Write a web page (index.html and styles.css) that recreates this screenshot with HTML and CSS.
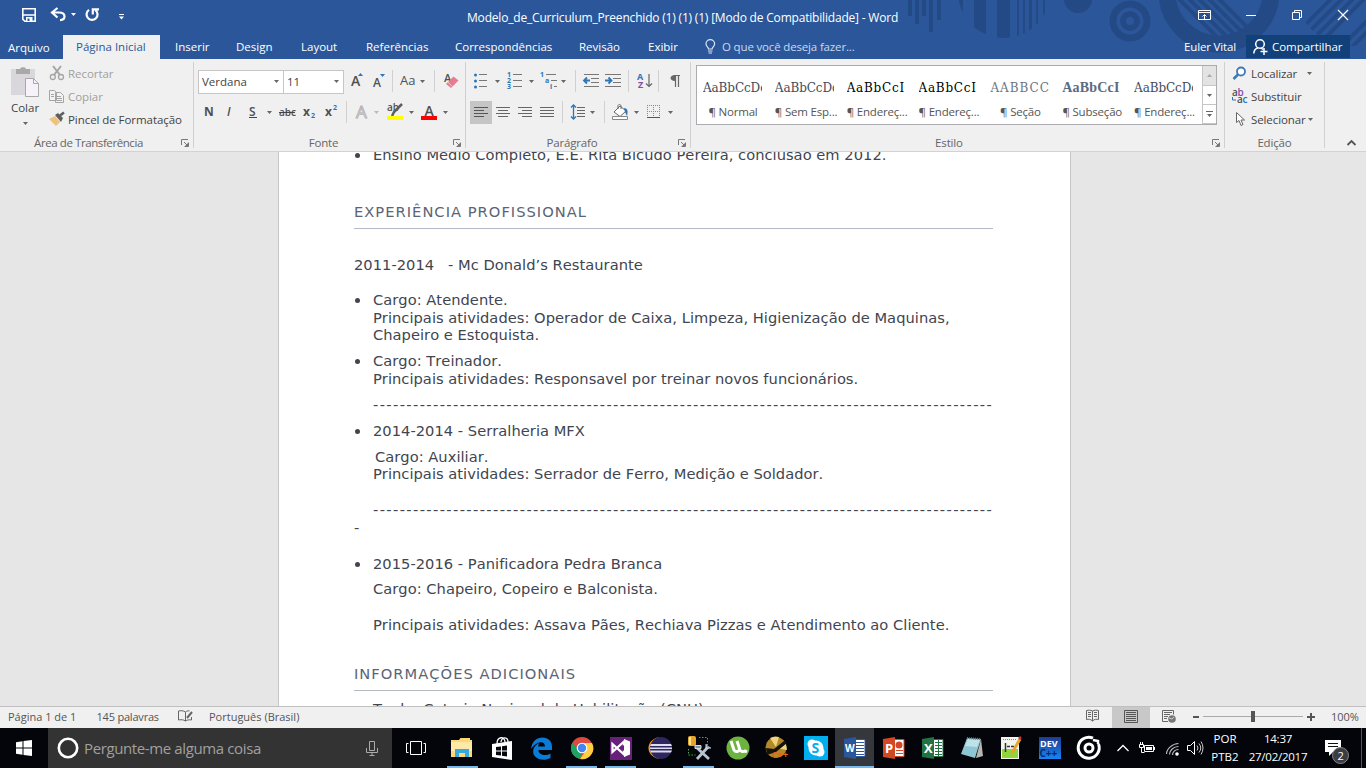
FILE: index.html
```html
<!DOCTYPE html>
<html lang="pt-BR">
<head>
<meta charset="utf-8">
<title>Modelo_de_Curriculum_Preenchido - Word</title>
<link rel="stylesheet" href="styles.css">
</head>
<body>
<svg width="0" height="0" class="defs"><defs>
<symbol id="caret" viewBox="0 0 5 3"><path d="M0 0h5L2.500 3z" fill="#666"/></symbol>
<symbol id="launch" viewBox="0 0 8 8"><path d="M.5 6V.5H7M3 3l3 3M7.500 3.500v4h-4" fill="none" stroke="#777"/><path d="M7 4v3H4z" fill="#777"/></symbol>
</defs></svg>
<div class="app">
<header class="head">
<svg class="pattern" width="480" height="59" viewBox="886 0 480 59">
<defs><clipPath id="c1"><circle cx="1004" cy="-8" r="46"/></clipPath><clipPath id="c2"><circle cx="1219" cy="-8" r="46"/></clipPath><clipPath id="c3"><circle cx="1352" cy="-12" r="58"/></clipPath></defs>
<g fill="#244a86"><path d="M908 0h4v16h-4zM915 0h4v24h-4zM922 0h4v16h-4zM929 0h4v32h-4zM937 0h4v20h-4z"/>
<path clip-path="url(#c1)" d="M955 0h8v40h-8zM974 0h12v40h-12zM997 0h13v40h-13zM1017 0h2v40h-2zM1023 0h2v40h-2zM1029 0h3v40h-3zM1036 0h2v40h-2zM1043 0h2v40h-2zM1049 0h2v40h-2z"/>
<circle cx="1078" cy="-1" r="14"/></g>
<g fill="none" stroke="#244a86"><circle cx="1130" cy="21" r="17" stroke-width="7"/><circle cx="1130" cy="21" r="7" stroke-width="6"/><circle cx="1219" cy="-8" r="52" stroke-width="17"/>
<path clip-path="url(#c2)" stroke-width="4" d="M1160-20l70 70M1170-20l70 70M1180-20l70 70M1190-20l70 70M1200-20l70 70"/>
<path clip-path="url(#c3)" stroke-width="4" d="M1350-20l-70 70M1361-20l-70 70M1372-20l-70 70M1383-20l-70 70M1408-20l-70 70M1419-20l-70 70"/></g>
</svg>
<div class="titlebar">
<svg width="29" height="35" viewBox="21 0 29 35"><path d="M22.800 8.800h12.400v12.400H24.800l-2-2zM22.500 15h13" fill="none" stroke="#fff" stroke-width="1.600"/><path d="M26 17h6.500v5H26z" fill="#fff"/><path d="M27.500 18.500h2V21h-2z" fill="#2b579a"/></svg>
<svg width="21" height="35" viewBox="50 0 21 35"><path d="M57.500 8L52 12.500l5.500 5M53 12.500h6c4.500 0 5.500 2.500 5.500 4 0 2.300-1.500 3.500-4.500 3.700" fill="none" stroke="#fff" stroke-width="2.200"/></svg>
<svg width="14" height="35" viewBox="71 0 14 35"><path d="M71 13h5l-2.500 3z" fill="#fff"/></svg>
<svg width="34" height="35" viewBox="85 0 34 35"><path d="M89 9.800a5.500 5.500 0 1 0 6.500.3M92.800 14.500V9.300H99" fill="none" stroke="#fff" stroke-width="2.200"/></svg>
<svg width="8" height="35" viewBox="119 0 8 35"><path d="M119 14h5v1h-5zM119 16.500h5l-2.500 3z" fill="#fff"/></svg>
<span class="doc-title">Modelo_de_Curriculum_Preenchido (1) (1) (1) [Modo de Compatibilidade] - Word</span>
<svg width="48" height="35" viewBox="1198 0 48 35"><path d="M1198.500 10.500h12v9h-12zM1198.500 12.500h12M1204.500 19v-4.500M1202.500 16.500l2-2 2 2" fill="none" stroke="#fff"/></svg>
<svg width="46" height="35" viewBox="1246 0 46 35"><path d="M1246 15.500h10" stroke="#fff"/></svg>
<svg width="46" height="35" viewBox="1292 0 46 35"><path d="M1292.500 12.500h7v7h-7zM1294.500 12.500v-2h7v7h-2" fill="none" stroke="#fff"/></svg>
<svg width="28" height="35" viewBox="1338 0 28 35"><path d="M1338 10l10 10M1348 10l-10 10" stroke="#fff" stroke-width="1.200"/></svg>
</div>
<nav class="tabs">
<span class="file">Arquivo</span><span class="active">Página Inicial</span><span>Inserir</span><span>Design</span><span>Layout</span><span>Referências</span><span>Correspondências</span><span>Revisão</span><span>Exibir</span>
<svg width="17" height="24" viewBox="705 35 17 24"><path d="M708.500 49c0-1.800-2.500-2.500-2.500-5a4.300 4.300 0 0 1 8.600 0c0 2.500-2.500 3.200-2.500 5zM708 51h4.500M708.500 53h3.500" fill="none" stroke="#dce6f4" stroke-width="1.200"/></svg>
<span class="tell">O que você deseja fazer...</span><span class="user">Euler Vital</span>
<span class="share"><svg width="20" height="23" viewBox="1252 35 20 23"><circle cx="1260" cy="44" r="4.300" fill="none" stroke="#fff" stroke-width="1.500"/><path d="M1258 48c-2.500.5-4 2.500-4.200 5.500M1261 48l2 1.500M1260.500 51.500h7M1264 48v7" fill="none" stroke="#fff" stroke-width="1.500"/></svg>Compartilhar</span>
</nav>
</header>

<section class="ribbon">
<div class="group clip">
<div class="paste"><svg width="42" height="41" viewBox="6 59 42 41"><path d="M13 69h24v26H13z" fill="#d9d6dc"/><path d="M18 74v-5h4c0-2.500 6-2.500 6 0h4v5z" fill="#a9a9a9"/><path d="M27.500 78.500h8l5 5v13h-13z" fill="#f7f2fa" stroke="#a9a9a9"/><path d="M35.500 78.500v5h5" fill="none" stroke="#a9a9a9"/></svg><span>Colar</span><svg width="5" height="3"><use href="#caret"/></svg></div>
<div class="clip-list">
<span class="off"><svg width="18" height="23" viewBox="50 62 18 23"><path d="M53 66l7 9M61 66l-7 9" stroke="#a5a5a5" stroke-width="2"/><circle cx="52.800" cy="77" r="2.500" fill="none" stroke="#a5a5a5" stroke-width="1.300"/><circle cx="61" cy="77" r="2.500" fill="none" stroke="#a5a5a5" stroke-width="1.300"/></svg>Recortar</span>
<span class="off"><svg width="18" height="23" viewBox="50 85 18 23"><path d="M49.500 90.500h5l2 2v8h-7zM55.500 92.500h5l3 3v7h-8z" fill="#f2f2f2" stroke="#a5a5a5"/><path d="M51 94.500h3M51 96.500h3M57 96.500h4M57 98.500h5M57 100.500h5" stroke="#a5a5a5"/></svg>Copiar</span>
<span><svg width="18" height="23" viewBox="50 108 18 23"><path d="M49 119l6-3 5 6-4 4z" fill="#edc27e"/><path d="M55 115l3-2 5 5-2 4z" fill="#5e5e5e"/><path d="M60 115.500l4-3" stroke="#5e5e5e" stroke-width="2.500"/></svg>Pincel de Formatação</span>
</div>
<footer><span>Área de Transferência</span><svg width="8" height="8"><use href="#launch"/></svg></footer>
</div>

<div class="group font">
<div class="row"><span class="box face">Verdana<svg width="5" height="3"><use href="#caret"/></svg></span><span class="box size">11<svg width="5" height="3"><use href="#caret"/></svg></span>
<svg width="27" height="31" viewBox="344 66 27 31"><text x="351" y="86" class="g s f14">A</text><path d="M358 76h5l-2.500-3z" fill="#2e75b6"/></svg>
<svg width="29" height="31" viewBox="371 66 29 31"><text x="373" y="87" class="g s f12">A</text><path d="M380 74h5l-2.500 3z" fill="#2e75b6"/><path d="M392.500 70v22" stroke="#d0d0d0"/></svg>
<svg width="42" height="31" viewBox="400 66 42 31"><text x="400" y="85" class="g f13">Aa</text><use href="#caret" x="420" y="80" width="5" height="3"/><path d="M434.500 70v22" stroke="#d0d0d0"/></svg>
<svg width="20" height="31" viewBox="442 66 20 31"><text x="444" y="82" class="g s f11">A</text><path d="M446 84l7.500-7.500 5 4-7.500 7.500z" fill="#e77c8e"/><path d="M448 82l4 4.500" stroke="#f5c4cc"/></svg></div>
<div class="row">
<svg width="29" height="31" viewBox="194 97 29 31"><text x="204" y="116" class="g b f12">N</text></svg>
<svg width="22" height="31" viewBox="223 97 22 31"><text x="227" y="116" class="g s i f12">I</text></svg>
<svg width="33" height="31" viewBox="245 97 33 31"><text x="249" y="116" class="g s f12">S</text><path d="M249 117.500h8" stroke="#444"/><use href="#caret" x="267" y="111" width="5" height="3"/></svg>
<svg width="23" height="31" viewBox="278 97 23 31"><text x="279" y="116" class="g s f10">abc</text><path d="M279 112.500h16" stroke="#444"/></svg>
<svg width="23" height="31" viewBox="301 97 23 31"><text x="303" y="116" class="g b f12">x</text><text x="311" y="118" class="bl b f7">2</text></svg>
<svg width="29" height="31" viewBox="324 97 29 31"><text x="325" y="116" class="g b f12">x</text><text x="333" y="110" class="bl b f7">2</text><path d="M346.500 101v22" stroke="#d0d0d0"/></svg>
<svg width="31" height="31" viewBox="353 97 31 31"><text x="356" y="118" class="outline">A</text><path d="M374 111h5l-2.500 3z" fill="#bbb"/></svg>
<svg width="34" height="31" viewBox="384 97 34 31"><text x="387" y="111" class="g s f10">ab</text><path d="M392 116l2-4 8-8" fill="none" stroke="#5e5e5e" stroke-width="2.500"/><path d="M387 116h16v4h-16z" fill="#ff0"/><use href="#caret" x="409" y="111" width="5" height="3"/></svg>
<svg width="34" height="31" viewBox="418 97 34 31"><text x="424.500" y="116" class="g s f14">A</text><path d="M421 116h16v4h-16z" fill="#f00"/><use href="#caret" x="443" y="111" width="5" height="3"/></svg></div>
<footer><span>Fonte</span><svg width="8" height="8"><use href="#launch"/></svg></footer>
</div>

<div class="group para">
<div class="row">
<svg width="39" height="31" viewBox="466 66 39 31"><g fill="#2e75b6"><circle cx="475.500" cy="75" r="1.500"/><circle cx="475.500" cy="81" r="1.500"/><circle cx="475.500" cy="87" r="1.500"/></g><path d="M479 74.500h8M479 80.500h8M479 86.500h8" stroke="#777"/><use href="#caret" x="495" y="80" width="5" height="3"/></svg>
<svg width="34" height="31" viewBox="505 66 34 31"><text x="507" y="77" class="bl b f7">1</text><text x="507" y="83" class="bl b f7">2</text><text x="507" y="89" class="bl b f7">3</text><path d="M513 74.500h9M513 80.500h9M513 86.500h9" stroke="#777"/><use href="#caret" x="529" y="80" width="5" height="3"/></svg>
<svg width="43" height="31" viewBox="539 66 43 31"><text x="540" y="77" class="bl b f7">1</text><text x="545" y="83" class="bl b f7">a</text><text x="550" y="89" class="bl b f7">i</text><path d="M546 74.500h10M551 80.500h6M554 86.500h3" stroke="#777"/><use href="#caret" x="561" y="80" width="5" height="3"/><path d="M575.500 70v22" stroke="#d0d0d0"/></svg>
<svg width="22" height="31" viewBox="582 66 22 31"><path d="M584 74.500h15M591 78.500h8M591 82.500h8M584 86.500h15" stroke="#777"/><path d="M590 80.500h-6M587 77.500l-3 3 3 3" fill="none" stroke="#2e75b6" stroke-width="1.800"/></svg>
<svg width="32" height="31" viewBox="604 66 32 31"><path d="M605 74.500h16M613 78.500h8M613 82.500h8M605 86.500h16" stroke="#777"/><path d="M605 80.500h6M608.500 77.500l3 3-3 3" fill="none" stroke="#2e75b6" stroke-width="1.800"/><path d="M628.500 70v22" stroke="#d0d0d0"/></svg>
<svg width="30" height="31" viewBox="636 66 30 31"><text x="637" y="80" class="bl b f9">A</text><text x="638" y="88" class="pu b f9">Z</text><path d="M649 74v12M646 83.500l3 3 3-3" fill="none" stroke="#666" stroke-width="1.200"/><path d="M658.500 70v22" stroke="#d0d0d0"/></svg>
<svg width="20" height="31" viewBox="666 66 20 31"><path d="M680 75.500h-6M675.500 75v12M678.500 75v12" stroke="#666" fill="none" stroke-width="1.200"/><path d="M675 75v6c-6 0-6-6 0-6z" fill="#666"/></svg></div>
<div class="row">
<svg width="28" height="31" viewBox="466 97 28 31"><path d="M470 101h22v23h-22z" fill="#c5c5c5"/><path d="M474 107.500h14M474 110.500h10M474 113.500h14M474 116.500h10" stroke="#555"/></svg>
<svg width="22" height="31" viewBox="494 97 22 31"><path d="M496 107.500h14M498 110.500h10M496 113.500h14M498 116.500h10" stroke="#666"/></svg>
<svg width="22" height="31" viewBox="516 97 22 31"><path d="M518 107.500h14M522 110.500h10M518 113.500h14M522 116.500h10" stroke="#666"/></svg>
<svg width="30" height="31" viewBox="538 97 30 31"><path d="M540 107.500h14M540 110.500h14M540 113.500h14M540 116.500h14" stroke="#666"/><path d="M562.500 101v22" stroke="#d0d0d0"/></svg>
<svg width="42" height="31" viewBox="568 97 42 31"><path d="M577 107.500h8M577 110.500h8M577 113.500h8M577 116.500h8" stroke="#666"/><path d="M573.500 105v14M571 107.500l2.500-2.500 2.500 2.500M571 116.500l2.500 2.500 2.500-2.500" fill="none" stroke="#2e75b6" stroke-width="1.300"/><use href="#caret" x="590" y="111" width="5" height="3"/><path d="M604.500 101v22" stroke="#d0d0d0"/></svg>
<svg width="34" height="31" viewBox="610 97 34 31"><path d="M614 112l6-6 6 5-6 5.500zM618 109v-3c0-2 3-2 3 0v3" fill="#fff" stroke="#666"/><path d="M624 108c4 0 4 4 3 8l-2-4z" fill="#2e75b6"/><path d="M612.500 116.500h15v3h-15z" fill="#fff" stroke="#888"/><use href="#caret" x="634" y="111" width="5" height="3"/></svg>
<svg width="32" height="31" viewBox="644 97 32 31"><path d="M647.500 105v12M653.500 105v12M659.500 105v12M647 105.500h13M647 111.500h13" stroke="#888" stroke-dasharray="1 1"/><path d="M647 117.500h13" stroke="#555"/><use href="#caret" x="668" y="111" width="5" height="3"/></svg></div>
<footer><span>Parágrafo</span><svg width="8" height="8"><use href="#launch"/></svg></footer>
</div>

<div class="group styles">
<div class="gallery">
<div class="st"><b>AaBbCcDd</b><span>¶ Normal</span></div><div class="st"><b>AaBbCcDd</b><span>¶ Sem Esp...</span></div><div class="st wide"><b>AaBbCcI</b><span>¶ Endereç...</span></div><div class="st wide"><b>AaBbCcI</b><span>¶ Endereç...</span></div><div class="st caps"><b>AABBCC</b><span>¶ Seção</span></div><div class="st bold"><b>AaBbCcI</b><span>¶ Subseção</span></div><div class="st"><b>AaBbCcDd</b><span>¶ Endereç...</span></div>
<div class="scroll"><i class="dis"><svg width="5" height="3"><path d="M0 3h5L2.500 0z" fill="#aaa"/></svg></i><i><svg width="5" height="3"><use href="#caret"/></svg></i><i><svg width="7" height="7"><path d="M0 .5h7" stroke="#666"/><path d="M1 3h5L3.500 6z" fill="#666"/></svg></i></div>
</div>
<footer><span>Estilo</span><svg width="8" height="8"><use href="#launch"/></svg></footer>
</div>

<div class="group edit">
<div class="edit-list">
<span><svg width="19" height="23" viewBox="1232 62 19 23"><circle cx="1241" cy="71.500" r="4" fill="#fff" stroke="#3b78b8" stroke-width="1.800"/><path d="M1238 74.500l-4.500 4.500" stroke="#3b78b8" stroke-width="2.500"/></svg><em>Localizar</em><svg width="5" height="3" class="far"><use href="#caret"/></svg></span>
<span><svg width="19" height="23" viewBox="1232 85 19 23"><text x="1232" y="96" class="g s f10">a</text><text x="1237.500" y="96" class="pu s f10">b</text><text x="1237" y="103" class="g s f10">a</text><text x="1242.500" y="103" class="bl s f10">c</text><path d="M1232.500 97v3h3.500" fill="none" stroke="#2e75b6"/></svg><em>Substituir</em></span>
<span><svg width="19" height="23" viewBox="1232 108 19 23"><path d="M1236.500 112.500v10l2.500-2 2 5 2-1-2-4.500h3.500z" fill="#fff" stroke="#666"/></svg><em>Selecionar</em><svg width="5" height="3"><use href="#caret"/></svg></span>
</div>
<footer><span>Edição</span></footer>
</div>
<div class="collapse"><svg width="9" height="6"><path d="M.5 5l4-4 4 4" fill="none" stroke="#555" stroke-width="1.800"/></svg></div>
</section>

<main class="desk"><article class="page">
<p class="li">Ensino Médio Completo, E.E. Rita Bicudo Pereira, conclusão em 2012.</p>
<h2>EXPERIÊNCIA PROFISSIONAL</h2>
<p><span class="years">2011-2014</span>- Mc Donald’s Restaurante</p>
<p class="li">Cargo: Atendente.</p>
<p class="in">Principais atividades: Operador de Caixa, Limpeza, Higienização de Maquinas,</p>
<p class="in">Chapeiro e Estoquista.</p>
<p class="li">Cargo: Treinador.</p>
<p class="in">Principais atividades: Responsavel por treinar novos funcionários.</p>
<p class="in dash">---------------------------------------------------------------------------------------------</p>
<p class="li">2014-2014 - Serralheria MFX</p>
<p class="in more">Cargo: Auxiliar.</p>
<p class="in">Principais atividades: Serrador de Ferro, Medição e Soldador.</p>
<p class="in dash">---------------------------------------------------------------------------------------------</p>
<p class="dash">-</p>
<p class="li">2015-2016 - Panificadora Pedra Branca</p>
<p class="in">Cargo: Chapeiro, Copeiro e Balconista.</p>
<p class="in">Principais atividades: Assava Pães, Rechiava Pizzas e Atendimento ao Cliente.</p>
<h2>INFORMAÇÕES ADICIONAIS</h2>
<p class="li">Tenho Cateria Nacional de Habilitação (CNH).</p>
</article></main>

<div class="status">
<span>Página 1 de 1</span><span class="words">145 palavras</span>
<svg width="31" height="21" viewBox="178 707 31 21"><path d="M185.500 721v-9c-2-1.500-5-1.500-7-1v9c2-.5 5-.5 7 1 1.500-1 3.500-1.500 6-1v-3M185.500 712c1-.8 2-1.200 4-1.200" fill="none" stroke="#666"/><path d="M187 718l5-6" stroke="#666" stroke-width="2"/></svg>
<span>Português (Brasil)</span>
<svg width="25" height="21" viewBox="1087 707 25 21"><path d="M1092.500 721v-10c-2-1-4-1-6-.5v9c2-.5 4-.5 6 1.500 2-2 4-2 6-1.500v-9c-2-.5-4-.5-6 .5M1088 712.500h3M1088 714.500h3M1088 716.500h3M1094 712.500h3M1094 714.500h3M1094 716.500h3" fill="none" stroke="#666"/></svg>
<svg class="on" width="38" height="21" viewBox="1112 707 38 21"><path d="M1124.500 710.500h13v12h-13zM1126 712.500h10M1126 714.500h10M1126 716.500h10M1126 718.500h10M1126 720.500h10" fill="none" stroke="#555"/></svg>
<svg width="43" height="21" viewBox="1150 707 43 21"><path d="M1168 721.500h-5.500v-11h11v4M1164 712.500h8M1164 714.500h6M1164 716.500h4M1164 718.500h3" fill="none" stroke="#666"/><circle cx="1172" cy="719" r="3.800" fill="#777"/><path d="M1169 718l3 1 2-2" stroke="#ccc" fill="none"/></svg>
<svg width="138" height="21" viewBox="1193 707 138 21"><path d="M1203 716.500h100" stroke="#aaa"/><path d="M1193 716h6v2h-6zM1251 711h4v11h-4zM1307 716h8v2h-8zM1310 713h2v8h-2z" fill="#555"/></svg>
<span>100%</span>
</div>

<div class="taskbar">
<div class="start"><svg width="16" height="16"><path d="M0 2.200l6.500-.9v6.200H0zM7.500 1.100L16 0v7.500H7.500zM0 8.500h6.500v6.200L0 13.800zM7.500 8.500H16V16l-8.500-1.100z" fill="#fff"/></svg></div>
<div class="search"><svg width="22" height="22"><circle cx="11" cy="11" r="9.200" fill="none" stroke="#fff" stroke-width="2.600"/></svg><span>Pergunte-me alguma coisa</span><svg width="12" height="17"><path d="M3.500 1.500h5v9h-5zM.5 8v4.500h11V8M6 13v3M3.500 15.500h5" fill="none" stroke="#aaa"/></svg></div>
<div class="view"><svg width="20" height="14"><path d="M4.500.5h11v13h-11zM2.500 2.500h-2v9h2M17.500 2.500h2v9h-2" fill="none" stroke="#fff"/></svg></div>
<div class="apps">
<i class="run"><svg width="24" height="24"><path d="M1 4h8l1.500-2H20v2h2v17H1z" fill="#fbd977"/><path d="M1 6h21v9H1z" fill="#ffe9a6"/><path d="M5 21v-8h14v8h-4v-4H9v4z" fill="#39a8dc"/></svg></i>
<i><svg width="24" height="24"><path d="M2 8l20-3v19L2 21z" fill="#fff"/><path d="M7 8c0-8 8-8 8-2M11 6c1-6 7-5 7 0" fill="none" stroke="#fff" stroke-width="1.300"/><path d="M6 11l5-.6v4H6zM12 10.200l5-.7v5h-5zM6 15.500h5v4l-5-.6zM12 15.500h5v5l-5-.7z" fill="#05070d"/></svg></i>
<i><svg width="24" height="24"><path d="M1 13C2 5 7 1.500 12.500 1.500 18 1.500 22 5 22 11v3H8.500c0 5 7 6.500 12 3.500v4.500C12 26.500 1 22 3.500 13c1-3 3.500-5 6-6-1 1.500-1.300 2.500-1.400 3.500H15c0-6-8-6-14 2.500z" fill="#0a7cd8"/></svg></i>
<i class="run"><svg width="24" height="24"><circle cx="12" cy="12" r="11" fill="#dd4b3e"/><path d="M2.500 6.500L8 14l4 3-2 6A11 11 0 0 1 2.500 6.500z" fill="#1da362"/><path d="M12 7h10a11 11 0 0 1-12 16l6-8.500z" fill="#ffce43"/><circle cx="12" cy="12" r="5.300" fill="#fff"/><circle cx="12" cy="12" r="4.200" fill="#4286f4"/></svg></i>
<i class="run"><svg width="24" height="24"><path d="M1 1h22v23H1z" fill="#68217a"/><path d="M3.500 8L15 18.500V5.500L3.500 16z" fill="none" stroke="#fff" stroke-width="2.300"/><path d="M15 3l6 2.500v13L15 21z" fill="#fff"/><path d="M15 9v6l-3.500-3z" fill="#68217a"/></svg></i>
<i><svg width="26" height="24"><path d="M12 1C-2 4-2 20 12 23c-8-5-8-17 0-22z" fill="#f7941e"/><circle cx="14" cy="12" r="11" fill="#2f2660"/><path d="M4 8h20l1 2H3zM3 11.500h22v1.500H3zM3 14.500h22l-1 2H4z" fill="#dedced"/></svg></i>
<i class="run"><svg width="26" height="26"><rect x="2" y="1" width="8" height="10" rx="2" fill="#e8a52e"/><path d="M4 2v8" stroke="#ffe48a" stroke-width="2"/><path d="M13 2.500h8.500V10M2.500 14v6h7" fill="none" stroke="#3faf47" stroke-dasharray="1.500 1.500"/><path d="M10 12l13 12M11 24l11-12" stroke="#b8c4cf" stroke-width="2.800"/><path d="M9 10.500h6v3H9zM20 9v4h5" fill="#8796a5" stroke="#d9dee4"/></svg></i>
<i><svg width="24" height="24"><circle cx="12" cy="12" r="11.500" fill="#6db33f"/><path d="M5 5l3 9c2 3 6 1 5.500-1.500L11 5M13 12c1 4 4 4 6 3l2 1" fill="none" stroke="#fff" stroke-width="3"/></svg></i>
<i><svg width="24" height="24"><circle cx="11" cy="11.500" r="10.500" fill="#b18928"/><path d="M11 11L5 2a11 11 0 0 1 9-1zM11 12l10-4 1 6z" fill="#efd47a"/><path d="M1 12l8 1 10-8 3 2-11 9-9 3z" fill="#16130d"/><text x="7" y="22" class="cpp">C++</text></svg></i>
<i><svg width="24" height="24"><path d="M0 0h24v24H0z" fill="#00aff0"/><circle cx="12" cy="12" r="7.500" fill="#fff"/><circle cx="8" cy="8" r="4.500" fill="#fff"/><circle cx="16" cy="16" r="4.500" fill="#fff"/><text x="7.500" y="17" class="sk">S</text></svg></i>
<i class="run cur"><svg width="24" height="24"><path d="M11 3.500h11v17H11z" fill="#fff" stroke="#2b579a"/><path d="M13 6.500h8M13 9.500h8M13 12.500h8M13 15.500h8M13 18.500h8" stroke="#2b579a"/><path d="M1 3l12-2v22L1 21z" fill="#2b579a"/><text x="2" y="16" class="off-l sm">W</text></svg></i>
<i><svg width="24" height="24"><path d="M11 3.500h11v17H11z" fill="#fff" stroke="#d24726"/><circle cx="17" cy="9" r="3.500" fill="#d24726"/><path d="M14 14.500h7M14 17.500h7" stroke="#d24726"/><path d="M1 3l12-2v22L1 21z" fill="#d24726"/><text x="3" y="17" class="off-l">P</text></svg></i>
<i><svg width="24" height="24"><path d="M11 3.500h11v17H11z" fill="#fff" stroke="#217346"/><path d="M14 6.500h7M14 9.500h7M14 12.500h7M14 15.500h7M14 18.500h7M17.500 4v16" stroke="#217346"/><path d="M1 3l12-2v22L1 21z" fill="#217346"/><text x="3" y="16.500" class="off-l">X</text></svg></i>
<i><svg width="24" height="24"><path d="M7 2l14 1-6 19L1 18z" fill="#8ec6d3"/><path d="M8 3l12 1-3 7-12-1z" fill="#bfe2e8"/><path d="M21 3l2 17-7 2z" fill="#b7b7b2"/><path d="M7 2l14 1" stroke="#66757d" stroke-width="2" stroke-dasharray="1 1"/></svg></i>
<i><svg width="24" height="24"><path d="M2 1h18v22H2z" fill="#f4f4ee"/><path d="M3 13h16v9H3z" fill="#90d53c"/><path d="M4 3.500h14" stroke="#888" stroke-dasharray="1 1"/><path d="M6.500 7v9M8 10.500h3M12 10.500h3" stroke="#333" stroke-width="1.500"/><path d="M21 3l-8 14" stroke="#e7a52d" stroke-width="3"/><path d="M20 3l2-2" stroke="#c33" stroke-width="2.500"/></svg></i>
<i><svg width="24" height="24"><defs><linearGradient id="dv" x2="0" y2="1"><stop stop-color="#223a8c"/><stop offset="1" stop-color="#1686f5"/></linearGradient></defs><path d="M1 1h22v22H1z" fill="url(#dv)"/><text x="2" y="11" class="dev">DEV</text><text x="1.500" y="21" class="dev2">C++</text></svg></i>
<i><svg width="24" height="24"><path d="M16 2.200A10.500 10.500 0 1 0 21.500 8" fill="none" stroke="#fff" stroke-width="3"/><path d="M16 4l5 1v3" fill="none" stroke="#fff" stroke-width="2.500"/><circle cx="12" cy="12" r="4" fill="none" stroke="#fff" stroke-width="3"/></svg></i>
</div>
<div class="tray">
<svg width="26" height="40" viewBox="1113 728 26 40"><path d="M1117.500 751l5.500-5.500 5.500 5.500" fill="none" stroke="#fff" stroke-width="1.300"/></svg>
<svg width="27" height="40" viewBox="1139 728 27 40"><path d="M1144.500 745.500h9v6h-9zM1154.500 747v3M1139.500 744.500h4v3h-4zM1140.500 742v2M1142.500 742v2M1141.500 748v4.500h3" fill="none" stroke="#fff"/><path d="M1146 747h6v3h-6z" fill="#fff"/></svg>
<svg width="20" height="40" viewBox="1166 728 20 40"><path d="M1166.500 754c0-5 6-10.500 12-10.500M1169.500 754.500c0-4 4-8 9-8M1172.500 755c0-3 2.500-5.500 6-5.500" fill="none" stroke="#bbb" stroke-width="1.200"/><circle cx="1177" cy="754" r="1.800" fill="#fff"/></svg>
<svg width="22" height="40" viewBox="1186 728 22 40"><path d="M1187.500 745.500h3l4-4v13l-4-4h-3z" fill="none" stroke="#fff"/><path d="M1197 745.500q2 2.500 0 5M1199 743.500q3.500 4.500 0 9M1201 741.500q4 6.500 0 13" fill="none" stroke="#ccc"/></svg>
<div class="lang"><span>POR</span><span>PTB2</span></div>
<div class="clock"><span>14:37</span><span>27/02/2017</span></div>
<svg width="48" height="40" viewBox="1318 728 48 40"><path d="M1325 740h16v12h-8l-4 4v-4h-4z" fill="#fff"/><path d="M1328 743.500h10M1328 746.500h10" stroke="#111"/><circle cx="1340.500" cy="755.500" r="8" fill="#3b3d41" stroke="#888"/><text x="1337.500" y="760" class="num">2</text><path d="M1361.500 728v40" stroke="#555"/></svg>
</div>
</div>
</div>
</body>
</html>
```

FILE: styles.css
```css
* { box-sizing: border-box; }
body { margin: 0; background: #e6e6e6; font-family: "Open Sans", "Noto Sans", sans-serif; font-size: 11.5px; color: #444; overflow: hidden; }
svg { display: block; flex: none; overflow: visible; }
.defs { position: absolute; }
i, em { font-style: normal; }
.app { width: 1366px; height: 768px; display: grid; grid-template-rows: 59px 93px 554px 22px 40px; overflow: hidden; }
span { white-space: nowrap; }

/* title bar and tabs */
.head { position: relative; background: #2b579a; color: #fff; overflow: hidden; }
.pattern { position: absolute; right: 0; top: 0; }
.titlebar, .tabs { position: relative; }
.titlebar { height: 35px; padding-left: 21px; display: grid; grid-template-columns: 29px 21px 14px 34px 348px 731px 48px 46px 46px 28px; align-items: center; }
.doc-title { font-size: 12px; letter-spacing: -.19px; }
.tabs { height: 24px; display: grid; grid-template-columns: 63px 97px 61px 65px 65px 89px 124px 69px 72px 17px 462px 62px 104px; line-height: 24px; }
.tabs > span { padding-left: 15px; }
.tabs .file { padding-left: 8px; line-height: 26px; }
.tabs .active { background: #f0f0f0; color: #2b579a; padding-left: 13px; }
.tabs .tell { padding-left: 0; color: #c9d8ef; letter-spacing: -.16px; }
.tabs .user { padding-left: 0; letter-spacing: -.15px; }
.tabs .share { display: flex; background: #124078; height: 23px; padding-left: 6px; letter-spacing: -.05px; }

/* ribbon */
.ribbon { background: #f0f0f0; border-bottom: 1px solid #d2d2d2; display: grid; grid-template-columns: 194px 272px 225px 534px 100px 41px; }
.group { position: relative; display: grid; grid-template-rows: 31px 31px 16px; padding-top: 7px; align-content: start; border-right: 1px solid #d4d4d4; border-image: linear-gradient(transparent 4px, #d0d0d0 4px, #d0d0d0 88px, transparent 88px) 1; }
.group footer { grid-row: 3; margin-top: 7px; height: 16px; line-height: 16px; display: grid; grid-template-columns: 1fr 12px; align-items: center; text-align: center; color: #666; letter-spacing: -.15px; }
.row { display: flex; }
.box { display: flex; align-items: center; justify-content: space-between; border: 1px solid #c6c6c6; background: #fff; height: 24px; margin-top: 4px; padding: 0 4px 2px 3px; }
.face { width: 86px; margin-left: 4px; }
.size { width: 61px; margin-left: -1px; }
.g { fill: #505050; } .bl { fill: #2e75b6; } .pu { fill: #8a4bb0; } .b { font-weight: 700; } .s { font-weight: 600; } .i { font-style: italic; }
.f7 { font-size: 7px; } .f9 { font-size: 9px; } .f10 { font-size: 10px; } .f11 { font-size: 11px; } .f12 { font-size: 12px; } .f13 { font-size: 13px; } .f14 { font-size: 14px; }
.outline { font-size: 17px; fill: #fff; stroke: #b5b5b5; stroke-width: 1; }
.clip { grid-template-columns: 48px 1fr; padding-top: 0; grid-template-rows: 69px 0 23px; }
.paste { display: flex; flex-direction: column; align-items: center; padding-left: 2px; line-height: 16px; }
.paste span { margin-bottom: 6px; }
.clip-list { padding-top: 3px; display: grid; grid-template-rows: 23px 23px 23px; padding-left: 2px; line-height: 23px; }
.clip-list span { display: flex; letter-spacing: -.06px; }
.off { color: #a0a0a0; }
.clip footer { grid-column: 1 / 3; letter-spacing: -.42px; }
.clip footer span { padding-right: 4px; }
.styles { grid-template-columns: 1fr; }
.styles footer span { padding-right: 5px; }
.gallery { grid-row: 1 / 3; width: 521px; margin: -1px 0 0 5px; height: 60px; border: 1px solid #ababb0; background: #fff; display: grid; grid-template-columns: repeat(7, 71.7px) 14px; padding-left: 2px; justify-content: space-between; }
.st { padding: 13px 4px 0; text-align: center; color: #555; overflow: hidden; }
.st b { display: block; width: 59px; overflow: hidden; font: 12px/18px "DejaVu Serif", serif; color: #444c5a; text-align: left; white-space: nowrap; letter-spacing: -.1px; }
.st span { display: block; width: 60px; line-height: 16px; margin-top: 7px; letter-spacing: -.2px; }
.st.wide b { color: #000; letter-spacing: .75px; }
.st.caps b { color: #6b7686; letter-spacing: 1px; }
.st.bold b { font-weight: 700; color: #5b6a80; letter-spacing: .2px; font-family: "Liberation Serif", serif; font-size: 14px; }
.scroll { display: grid; grid-template-rows: 20px 19px 19px; border-left: 1px solid #c6c6c6; }
.scroll i { display: flex; align-items: center; justify-content: center; border-bottom: 1px solid #c6c6c6; }
.scroll .dis { background: #e3e3e3; }
.edit { padding-top: 0; grid-template-rows: 69px 0 23px; }
.edit footer { grid-template-columns: 1fr; }
.edit-list { padding: 3px 0 0 7px; display: grid; grid-template-rows: 23px 23px 23px; line-height: 23px; }
.edit-list span { display: flex; align-items: center; letter-spacing: -.1px; }
.edit-list em { margin-right: 2px; }
.edit-list .far { margin-left: 8px; }
.collapse { display: flex; align-items: flex-end; padding: 0 0 5px 22px; }

/* document */
.desk { overflow: hidden; padding-left: 278px; background: #e6e6e6; }
.page { width: 793px; height: 554px; overflow: hidden; background: #fff; border: solid #c6c6c6; border-width: 0 1px; padding: 0 78px 0 75px; font: 14.67px/18px "DejaVu Sans", Verdana, sans-serif; font-kerning: none; letter-spacing: .03px; color: #414550; display: grid; grid-template-rows: 51px 53px 35px 18px 17px 26px 18px 26px 26px 26px 17px 36px 18px 36px 25px 36px 49px 35px 18px; }
.page > * { margin: 0; white-space: nowrap; }
.page > :first-child { margin-top: -6px; }
.page h2 { height: 26px; border-bottom: 1px solid #b5bbc4; font-size: 14.67px; font-weight: 400; color: #5b6475; letter-spacing: 1.03px; }
.in { padding-left: 19px; }
.in.more { padding-left: 21px; }
.li { display: flex; align-items: flex-start; }
.li::before { content: ""; width: 5px; height: 5px; border-radius: 3px; background: #414550; margin: 7px 13px 0 1px; flex: none; }
.page .dash { letter-spacing: 1.38px; }
.years { display: inline-block; width: 94px; }

/* status bar */
.status { background: #f0f0f0; border-top: 1px solid #c0c0c0; padding-left: 8px; display: grid; grid-template-columns: 88.5px 81.5px 31px 878px 25px 38px 43px 138px 35px; line-height: 19px; font-size: 11px; color: #555; }
.status .on { background: #c8c8c8; }
.words { letter-spacing: -.2px; }

/* taskbar */
.taskbar { background: #03050b; display: grid; grid-template-columns: 48px 344px 50px 671px 253px; color: #fff; }
.start { display: flex; align-items: center; justify-content: center; }
.search { background: #333; display: flex; align-items: center; padding: 0 14px 0 9px; font-size: 15px; letter-spacing: -.38px; color: #a0a0a0; }
.search span { flex: 1; padding-left: 5px; }
.view { display: flex; align-items: center; padding-left: 14px; }
.apps { display: grid; grid-template-columns: 40px 40px 40px 39px repeat(13, 39px); }
.apps i { display: flex; align-items: center; justify-content: center; }
.apps .run { background: linear-gradient(#76b9ed, #76b9ed) 50% 100% / 31px 2px no-repeat; }
.apps .cur { background-color: #34373c; background-size: 39px 2px; }
.tray { display: flex; text-align: center; font-size: 11.5px; }
.tray div { display: flex; flex-direction: column; padding-top: 2px; line-height: 18px; }
.lang { width: 34px; }
.clock { width: 76px; padding-right: 4px; letter-spacing: -.25px; }
.off-l { font-size: 13px; font-weight: 700; fill: #fff; }
.off-l.sm { font-size: 10px; }
.cpp { font-size: 9px; font-weight: 700; fill: #e4631c; }
.sk { font-size: 14px; font-weight: 700; fill: #00aff0; }
.dev { font-size: 9px; font-weight: 700; fill: #fff; }
.dev2 { font-size: 10px; font-weight: 700; fill: #0a2a6e; }
.num { font-size: 11px; fill: #fff; }
```
